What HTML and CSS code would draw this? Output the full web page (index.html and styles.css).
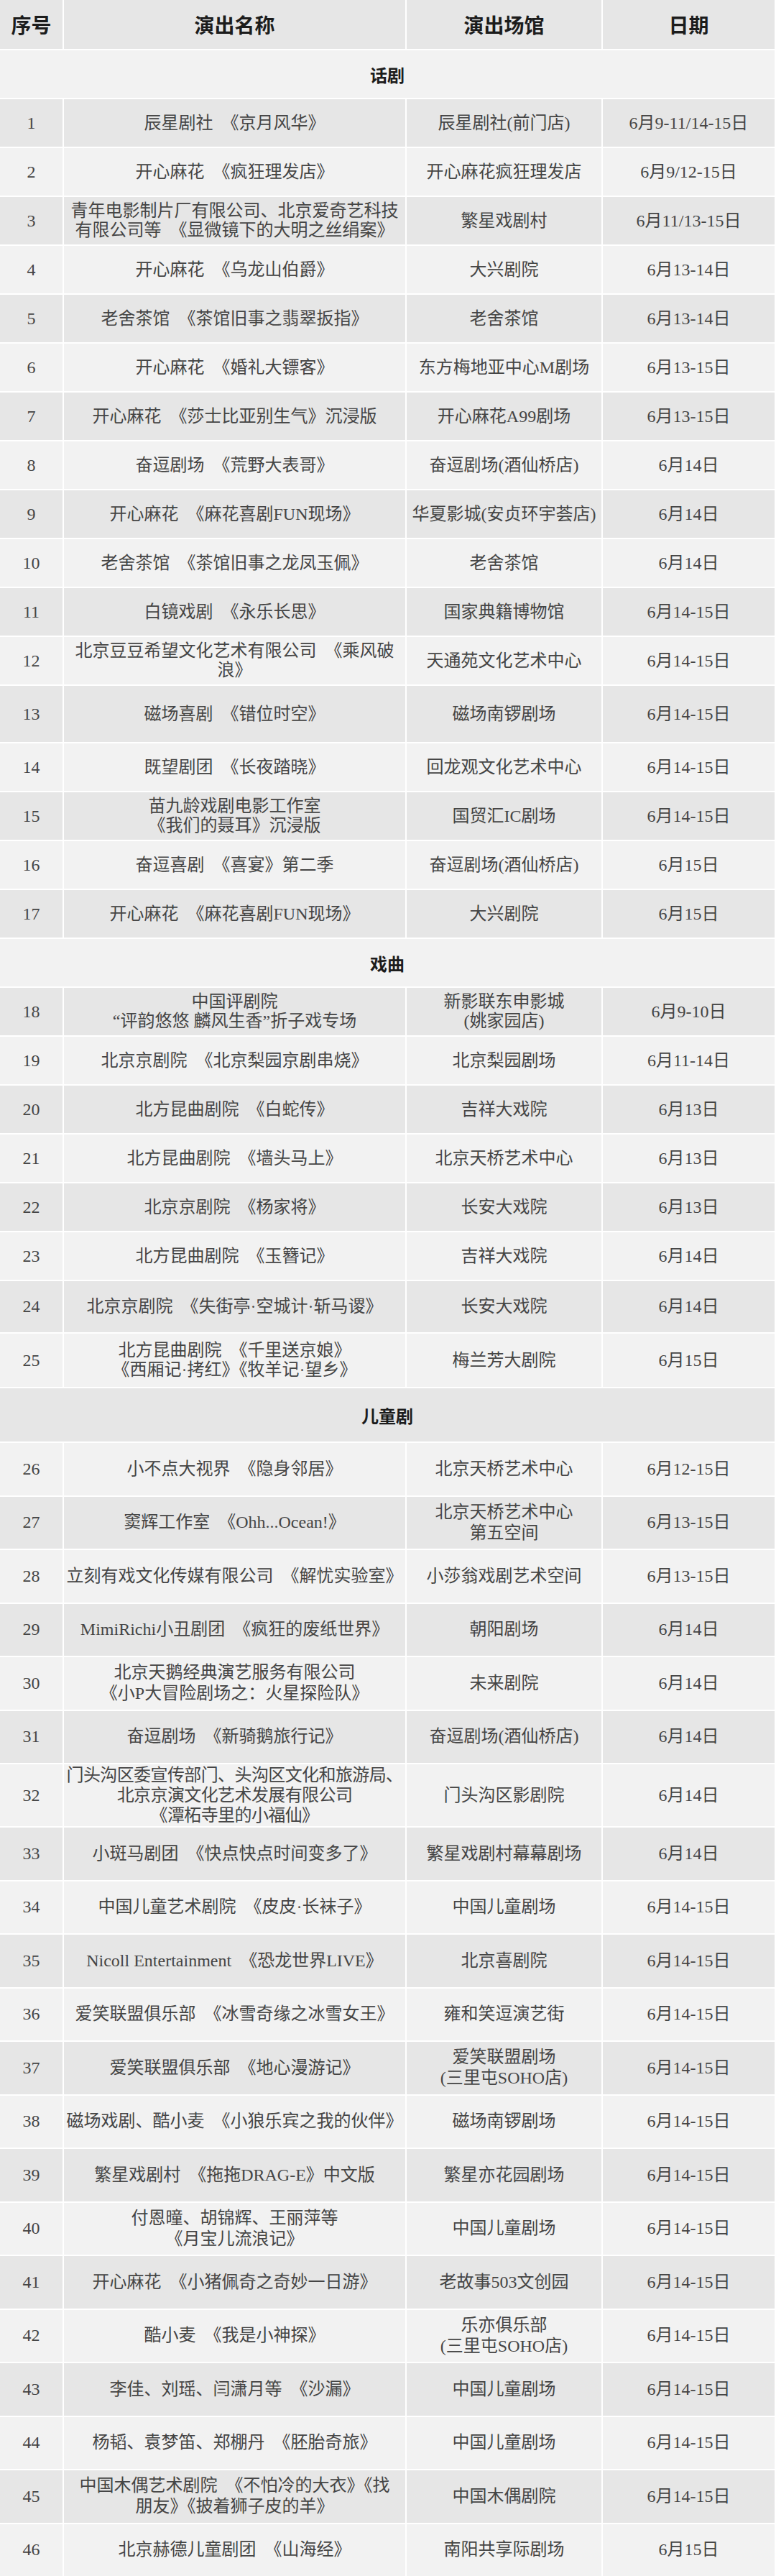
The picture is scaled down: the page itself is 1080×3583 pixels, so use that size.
FILE: index.html
```html
<!DOCTYPE html>
<html lang="zh-CN">
<head>
<meta charset="utf-8">
<title>演出安排</title>
<link rel="stylesheet" href="styles.css">
</head>
<body>
<div class="sched">
  <div class="row row--head"><div class="cell">序号</div><div class="cell">演出名称</div><div class="cell">演出场馆</div><div class="cell">日期</div></div>

  <div class="row row--section"><div class="cell">话剧</div></div>
  <div class="row"><div class="cell">1</div><div class="cell">辰星剧社&ensp;《京月风华》</div><div class="cell">辰星剧社(前门店)</div><div class="cell">6月9-11/14-15日</div></div>
  <div class="row"><div class="cell">2</div><div class="cell">开心麻花&ensp;《疯狂理发店》</div><div class="cell">开心麻花疯狂理发店</div><div class="cell">6月9/12-15日</div></div>
  <div class="row"><div class="cell">3</div><div class="cell">青年电影制片厂有限公司、北京爱奇艺科技<br>有限公司等&ensp;《显微镜下的大明之丝绢案》</div><div class="cell">繁星戏剧村</div><div class="cell">6月11/13-15日</div></div>
  <div class="row"><div class="cell">4</div><div class="cell">开心麻花&ensp;《乌龙山伯爵》</div><div class="cell">大兴剧院</div><div class="cell">6月13-14日</div></div>
  <div class="row"><div class="cell">5</div><div class="cell">老舍茶馆&ensp;《茶馆旧事之翡翠扳指》</div><div class="cell">老舍茶馆</div><div class="cell">6月13-14日</div></div>
  <div class="row"><div class="cell">6</div><div class="cell">开心麻花&ensp;《婚礼大镖客》</div><div class="cell">东方梅地亚中心M剧场</div><div class="cell">6月13-15日</div></div>
  <div class="row"><div class="cell">7</div><div class="cell">开心麻花&ensp;《莎士比亚别生气》沉浸版</div><div class="cell">开心麻花A99剧场</div><div class="cell">6月13-15日</div></div>
  <div class="row"><div class="cell">8</div><div class="cell">奋逗剧场&ensp;《荒野大表哥》</div><div class="cell">奋逗剧场(酒仙桥店)</div><div class="cell">6月14日</div></div>
  <div class="row"><div class="cell">9</div><div class="cell">开心麻花&ensp;《麻花喜剧FUN现场》</div><div class="cell">华夏影城(安贞环宇荟店)</div><div class="cell">6月14日</div></div>
  <div class="row"><div class="cell">10</div><div class="cell">老舍茶馆&ensp;《茶馆旧事之龙凤玉佩》</div><div class="cell">老舍茶馆</div><div class="cell">6月14日</div></div>
  <div class="row"><div class="cell">11</div><div class="cell">白镜戏剧&ensp;《永乐长思》</div><div class="cell">国家典籍博物馆</div><div class="cell">6月14-15日</div></div>
  <div class="row"><div class="cell">12</div><div class="cell">北京豆豆希望文化艺术有限公司&ensp;《乘风破<br>浪》</div><div class="cell">天通苑文化艺术中心</div><div class="cell">6月14-15日</div></div>
  <div class="row row--tall"><div class="cell">13</div><div class="cell">磁场喜剧&ensp;《错位时空》</div><div class="cell">磁场南锣剧场</div><div class="cell">6月14-15日</div></div>
  <div class="row"><div class="cell">14</div><div class="cell">既望剧团&ensp;《长夜踏晓》</div><div class="cell">回龙观文化艺术中心</div><div class="cell">6月14-15日</div></div>
  <div class="row"><div class="cell">15</div><div class="cell">苗九龄戏剧电影工作室<br>《我们的聂耳》沉浸版</div><div class="cell">国贸汇IC剧场</div><div class="cell">6月14-15日</div></div>
  <div class="row"><div class="cell">16</div><div class="cell">奋逗喜剧&ensp;《喜宴》第二季</div><div class="cell">奋逗剧场(酒仙桥店)</div><div class="cell">6月15日</div></div>
  <div class="row"><div class="cell">17</div><div class="cell">开心麻花&ensp;《麻花喜剧FUN现场》</div><div class="cell">大兴剧院</div><div class="cell">6月15日</div></div>

  <div class="row row--section"><div class="cell">戏曲</div></div>
  <div class="row"><div class="cell">18</div><div class="cell">中国评剧院<br>“评韵悠悠 麟风生香”折子戏专场</div><div class="cell">新影联东申影城<br>(姚家园店)</div><div class="cell">6月9-10日</div></div>
  <div class="row"><div class="cell">19</div><div class="cell">北京京剧院&ensp;《北京梨园京剧串烧》</div><div class="cell">北京梨园剧场</div><div class="cell">6月11-14日</div></div>
  <div class="row"><div class="cell">20</div><div class="cell">北方昆曲剧院&ensp;《白蛇传》</div><div class="cell">吉祥大戏院</div><div class="cell">6月13日</div></div>
  <div class="row"><div class="cell">21</div><div class="cell">北方昆曲剧院&ensp;《墙头马上》</div><div class="cell">北京天桥艺术中心</div><div class="cell">6月13日</div></div>
  <div class="row"><div class="cell">22</div><div class="cell">北京京剧院&ensp;《杨家将》</div><div class="cell">长安大戏院</div><div class="cell">6月13日</div></div>
  <div class="row"><div class="cell">23</div><div class="cell">北方昆曲剧院&ensp;《玉簪记》</div><div class="cell">吉祥大戏院</div><div class="cell">6月14日</div></div>
  <div class="row row--mid"><div class="cell">24</div><div class="cell">北京京剧院&ensp;《失街亭·空城计·斩马谡》</div><div class="cell">长安大戏院</div><div class="cell">6月14日</div></div>
  <div class="row row--big"><div class="cell">25</div><div class="cell">北方昆曲剧院&ensp;《千里送京娘》<br>《西厢记·拷红》《牧羊记·望乡》</div><div class="cell">梅兰芳大剧院</div><div class="cell">6月15日</div></div>

  <div class="row row--section row--big"><div class="cell">儿童剧</div></div>
  <div class="row row--kids"><div class="cell">26</div><div class="cell">小不点大视界&ensp;《隐身邻居》</div><div class="cell">北京天桥艺术中心</div><div class="cell">6月12-15日</div></div>
  <div class="row row--kids"><div class="cell">27</div><div class="cell">窦辉工作室&ensp;《Ohh...Ocean!》</div><div class="cell">北京天桥艺术中心<br>第五空间</div><div class="cell">6月13-15日</div></div>
  <div class="row row--kids"><div class="cell">28</div><div class="cell">立刻有戏文化传媒有限公司&ensp;《解忧实验室》</div><div class="cell">小莎翁戏剧艺术空间</div><div class="cell">6月13-15日</div></div>
  <div class="row row--kids"><div class="cell">29</div><div class="cell">MimiRichi小丑剧团&ensp;《疯狂的废纸世界》</div><div class="cell">朝阳剧场</div><div class="cell">6月14日</div></div>
  <div class="row row--kids"><div class="cell">30</div><div class="cell">北京天鹅经典演艺服务有限公司<br>《小P大冒险剧场之：火星探险队》</div><div class="cell">未来剧院</div><div class="cell">6月14日</div></div>
  <div class="row row--kids"><div class="cell">31</div><div class="cell">奋逗剧场&ensp;《新骑鹅旅行记》</div><div class="cell">奋逗剧场(酒仙桥店)</div><div class="cell">6月14日</div></div>
  <div class="row row--kids row--xl"><div class="cell">32</div><div class="cell cell--tight">门头沟区委宣传部门、头沟区文化和旅游局、<br>北京京演文化艺术发展有限公司<br>《潭柘寺里的小福仙》</div><div class="cell">门头沟区影剧院</div><div class="cell">6月14日</div></div>
  <div class="row row--kids"><div class="cell">33</div><div class="cell">小斑马剧团&ensp;《快点快点时间变多了》</div><div class="cell">繁星戏剧村幕幕剧场</div><div class="cell">6月14日</div></div>
  <div class="row row--kids"><div class="cell">34</div><div class="cell">中国儿童艺术剧院&ensp;《皮皮·长袜子》</div><div class="cell">中国儿童剧场</div><div class="cell">6月14-15日</div></div>
  <div class="row row--kids"><div class="cell">35</div><div class="cell">Nicoll Entertainment&ensp;《恐龙世界LIVE》</div><div class="cell">北京喜剧院</div><div class="cell">6月14-15日</div></div>
  <div class="row row--kids"><div class="cell">36</div><div class="cell">爱笑联盟俱乐部&ensp;《冰雪奇缘之冰雪女王》</div><div class="cell">雍和笑逗演艺街</div><div class="cell">6月14-15日</div></div>
  <div class="row row--kids"><div class="cell">37</div><div class="cell">爱笑联盟俱乐部&ensp;《地心漫游记》</div><div class="cell">爱笑联盟剧场<br>(三里屯SOHO店)</div><div class="cell">6月14-15日</div></div>
  <div class="row row--kids"><div class="cell">38</div><div class="cell">磁场戏剧、酷小麦&ensp;《小狼乐宾之我的伙伴》</div><div class="cell">磁场南锣剧场</div><div class="cell">6月14-15日</div></div>
  <div class="row row--kids"><div class="cell">39</div><div class="cell">繁星戏剧村&ensp;《拖拖DRAG-E》中文版</div><div class="cell">繁星亦花园剧场</div><div class="cell">6月14-15日</div></div>
  <div class="row row--kids"><div class="cell">40</div><div class="cell">付恩曈、胡锦辉、王丽萍等<br>《月宝儿流浪记》</div><div class="cell">中国儿童剧场</div><div class="cell">6月14-15日</div></div>
  <div class="row row--kids"><div class="cell">41</div><div class="cell">开心麻花&ensp;《小猪佩奇之奇妙一日游》</div><div class="cell">老故事503文创园</div><div class="cell">6月14-15日</div></div>
  <div class="row row--kids"><div class="cell">42</div><div class="cell">酷小麦&ensp;《我是小神探》</div><div class="cell">乐亦俱乐部<br>(三里屯SOHO店)</div><div class="cell">6月14-15日</div></div>
  <div class="row row--kids"><div class="cell">43</div><div class="cell">李佳、刘瑶、闫潇月等&ensp;《沙漏》</div><div class="cell">中国儿童剧场</div><div class="cell">6月14-15日</div></div>
  <div class="row row--kids"><div class="cell">44</div><div class="cell">杨韬、袁梦笛、郑棚丹&ensp;《胚胎奇旅》</div><div class="cell">中国儿童剧场</div><div class="cell">6月14-15日</div></div>
  <div class="row row--kids"><div class="cell">45</div><div class="cell">中国木偶艺术剧院&ensp;《不怕冷的大衣》《找<br>朋友》《披着狮子皮的羊》</div><div class="cell">中国木偶剧院</div><div class="cell">6月14-15日</div></div>
  <div class="row row--kids"><div class="cell">46</div><div class="cell">北京赫德儿童剧团&ensp;《山海经》</div><div class="cell">南阳共享际剧场</div><div class="cell">6月15日</div></div>
</div>
</body>
</html>
```

FILE: styles.css
```css
html, body {
  margin: 0;
  padding: 0;
  background: #ffffff;
}

body {
  font-family: "Liberation Serif", "Noto Sans CJK SC", serif;
  color: #454545;
}

.sched {
  display: flex;
  flex-direction: column;
  gap: 2px;
  width: 1078px;
}

.row {
  display: grid;
  grid-template-columns: 87px 475px 271px 239px;
  column-gap: 2px;
  height: 66px;
}

.cell {
  display: flex;
  align-items: center;
  justify-content: center;
  text-align: center;
  padding: 0 2px;
  font-size: 24px;
  line-height: 27px;
}

.cell--tight {
  letter-spacing: -0.6px;
}

.row:nth-child(odd) .cell {
  background: #e6e6e6;
}

.row:nth-child(even) .cell {
  background: #f2f2f2;
}

.row--head {
  height: 68px;
}

.row--head .cell {
  font-size: 28px;
  font-weight: 700;
  color: #1c1c1c;
  font-family: "Noto Sans CJK SC", sans-serif;
}

.row--section .cell {
  grid-column: 1 / -1;
  font-weight: 700;
  color: #1c1c1c;
  font-family: "Noto Sans CJK SC", sans-serif;
}

.row--tall {
  height: 78px;
}

.row--mid {
  height: 71px;
}

.row--big {
  height: 74px;
}

.row--kids {
  height: 72.5px;
}

.row--kids .cell {
  line-height: 29px;
}

.row--xl {
  height: 86px;
}

.row--xl .cell {
  line-height: 28px;
}
```
